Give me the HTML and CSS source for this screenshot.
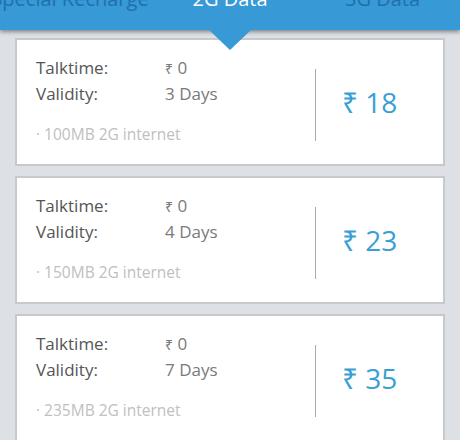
FILE: index.html
```html
<!DOCTYPE html>
<html>
<head>
<meta charset="utf-8">
<link rel="stylesheet" href="styles.css">
</head>
<body>
<header class="tabbar">
  <div class="tabs">
    <div class="tab tab-1">Special Recharge</div>
    <div class="tab tab-2 active">2G Data</div>
    <div class="tab tab-3">3G Data</div>
  </div>
  <span class="pointer"></span>
</header>
<main class="list">
  <section class="card">
    <div class="info">
      <div class="row"><span class="label">Talktime:</span><span class="value"><span class="rs">₹</span> 0</span></div>
      <div class="row"><span class="label">Validity:</span><span class="value">3 Days</span></div>
      <div class="note">· 100MB 2G internet</div>
    </div>
    <div class="divider"></div>
    <div class="price">₹ 18</div>
  </section>
  <section class="card">
    <div class="info">
      <div class="row"><span class="label">Talktime:</span><span class="value"><span class="rs">₹</span> 0</span></div>
      <div class="row"><span class="label">Validity:</span><span class="value">4 Days</span></div>
      <div class="note">· 150MB 2G internet</div>
    </div>
    <div class="divider"></div>
    <div class="price">₹ 23</div>
  </section>
  <section class="card">
    <div class="info">
      <div class="row"><span class="label">Talktime:</span><span class="value"><span class="rs">₹</span> 0</span></div>
      <div class="row"><span class="label">Validity:</span><span class="value">7 Days</span></div>
      <div class="note">· 235MB 2G internet</div>
    </div>
    <div class="divider"></div>
    <div class="price">₹ 35</div>
  </section>
</main>
</body>
</html>
```
FILE: styles.css
```css
* { box-sizing: border-box; }
html, body { margin: 0; padding: 0; }
body {
  width: 460px;
  height: 440px;
  overflow: hidden;
  background: #dde1e5;
  font-family: "Open Sans", "Noto Sans", sans-serif;
}
.tabbar {
  position: relative;
  display: flow-root;
  height: 30px;
  background: #3799d6;
  box-shadow: 0 2px 4px rgba(0, 0, 0, 0.4);
  z-index: 2;
}
.tabs {
  display: flex;
  margin-left: -15px;
  margin-top: -16px;
}
.tab {
  font-size: 20px;
  line-height: 30px;
  text-align: center;
  color: #226fac;
  white-space: nowrap;
}
.tab-1 { width: 170px; }
.tab-2 { width: 150px; }
.tab-3 { width: 155px; }
.tab.active { color: #ffffff; }
.pointer {
  position: absolute;
  left: 209px;
  top: 30px;
  width: 0;
  height: 0;
  border-left: 21px solid transparent;
  border-right: 21px solid transparent;
  border-top: 20px solid #3799d6;
}
.list {
  display: flex;
  flex-direction: column;
  gap: 10px;
  padding: 8px 15px 0;
}
.card {
  display: flex;
  align-items: center;
  height: 128px;
  background: #ffffff;
  border: 2px solid #c6cacd;
  flex-shrink: 0;
}
.info {
  align-self: flex-start;
  width: 298px;
  padding: 15px 0 0 19px;
}
.row {
  display: flex;
  font-size: 17px;
  line-height: 25px;
}
.label {
  width: 129px;
  color: #555555;
}
.value {
  color: #7a7a7a;
}
.rs { font-size: 14px; }
.note {
  margin-top: 18px;
  font-size: 15.5px;
  line-height: 20px;
  color: #c0c0c0;
}
.divider {
  width: 1px;
  height: 72px;
  margin-top: 6px;
  background: #a9a9a9;
}
.price {
  padding-left: 26px;
  font-size: 28px;
  color: #3a9fd6;
  white-space: nowrap;
}
```
